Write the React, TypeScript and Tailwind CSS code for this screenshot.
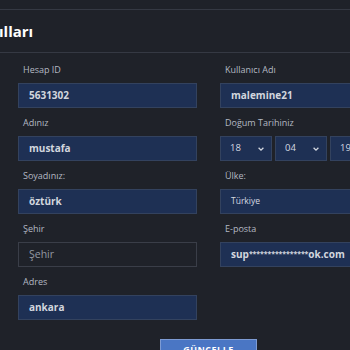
import React from 'react';

const font = { fontFamily: '"Open Sans", "Noto Sans", sans-serif' };

function Label({ children }: { children: React.ReactNode }) {
  return <div className="text-[9px] leading-[12px] text-[#b4b9c3] pl-[5px] mb-[7px]">{children}</div>;
}

function Field({ label, children }: { label: string; children: React.ReactNode }) {
  return (
    <div>
      <Label>{label}</Label>
      <div className="h-[25px] bg-[#1e3054] border border-[#33425e] flex items-center pl-[10px] text-[10px] font-bold text-[#d2d6de] whitespace-nowrap overflow-hidden">
        {children}
      </div>
    </div>
  );
}

function Select({ value }: { value: string }) {
  return (
    <div className="h-[25px] w-[52px] bg-[#1e3054] border border-[#33425e] flex items-center justify-between pl-[9px] pr-[6px] text-[9.5px] text-[#d5d9e1] shrink-0">
      <span>{value}</span>
      <svg width="8" height="8" viewBox="0 0 10 10" fill="none" stroke="#d5d9e1" strokeWidth="1.6">
        <path d="M2 3.5 L5 6.5 L8 3.5" />
      </svg>
    </div>
  );
}

export default function App() {
  return (
    <div className="w-[350px] h-[350px] overflow-hidden bg-[#1f2229]" style={font}>
      <div className="h-[10px] border-b border-[#353943]" />
      <div className="h-[43px] border-b border-[#353943] flex items-center overflow-hidden">
        <h1 className="text-[15px] font-bold text-white -ml-[1px] whitespace-nowrap">ılları</h1>
      </div>
      <div className="w-[420px] pl-[18px] pt-[11px]">
        <div className="grid grid-cols-[179px_179px] gap-x-[23px] gap-y-[9px]">
          <Field label="Hesap ID">5631302</Field>
          <Field label="Kullanıcı Adı">malemine21</Field>
          <Field label="Adınız">mustafa</Field>
          <div>
            <Label>Doğum Tarihiniz</Label>
            <div className="flex gap-[3px]">
              <Select value="18" />
              <Select value="04" />
              <Select value="1987" />
            </div>
          </div>
          <Field label="Soyadınız:">öztürk</Field>
          <div>
            <Label>Ülke:</Label>
            <div className="h-[25px] bg-[#1e3054] border border-[#33425e] flex items-center pl-[10px] text-[8.5px] font-medium text-[#d5d9e1]">
              Türkiye
            </div>
          </div>
          <div>
            <Label>Şehir</Label>
            <div className="h-[25px] border border-[#3a3e48] flex items-center pl-[10px] text-[10.5px] font-medium text-[#959aa3]">
              Şehir
            </div>
          </div>
          <Field label="E-posta">
            sup<span className="text-[7px] tracking-[-0.1px]">****************</span>ok.com
          </Field>
          <Field label="Adres">ankara</Field>
        </div>
        <div className="w-[381px] flex justify-center mt-[19px]">
          <button className="w-[97px] h-[28px] bg-[#4a76c4] border border-[#7d9bd3] text-white text-[9px] font-bold tracking-[0.5px] flex items-start justify-center pt-[3px]">
            GÜNCELLE
          </button>
        </div>
      </div>
    </div>
  );
}
